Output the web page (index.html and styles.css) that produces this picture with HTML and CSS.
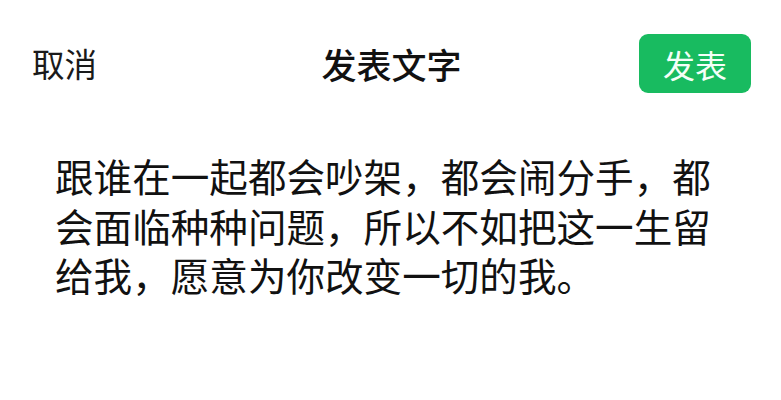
FILE: index.html
```html
<!DOCTYPE html>
<html lang="zh-CN">
<head>
<meta charset="utf-8">
<link rel="stylesheet" href="styles.css">
</head>
<body>
<div class="page">
  <header class="bar">
    <span class="cancel">取消</span>
    <span class="title">发表文字</span>
    <span class="actions"><button class="publish">发表</button></span>
  </header>
  <p class="content">跟谁在一起都会吵架，都会闹分手，都会面临种种问题，所以不如把这一生留给我，愿意为你改变一切的我。</p>
</div>
</body>
</html>
```

FILE: styles.css
```css
html, body {
  margin: 0;
  padding: 0;
  background: #ffffff;
}
body {
  width: 781px;
  height: 400px;
  overflow: hidden;
  font-family: "Noto Sans CJK SC", "Noto Sans", sans-serif;
  color: #111111;
}
.page {
  display: flex;
  flex-direction: column;
}
.bar {
  display: grid;
  grid-template-columns: 1fr auto 1fr;
  align-items: center;
  padding: 34px 30px 0 32px;
  height: 59px;
}
.cancel {
  font-size: 32.5px;
  line-height: 1;
  color: #1a1a1a;
}
.title {
  font-size: 35px;
  line-height: 1;
  font-weight: 500;
  color: #111111;
}
.actions {
  display: flex;
  justify-content: flex-end;
}
.publish {
  width: 112px;
  height: 59px;
  border: none;
  border-radius: 9px;
  background: #18bb60;
  color: #f4fff8;
  font-family: inherit;
  font-size: 32px;
  font-weight: 400;
  padding: 0;
  line-height: 1;
}
.content {
  margin: 0;
  padding: 58px 50px 0 55px;
  font-size: 38.6px;
  line-height: 49.5px;
  color: #111111;
}
```
